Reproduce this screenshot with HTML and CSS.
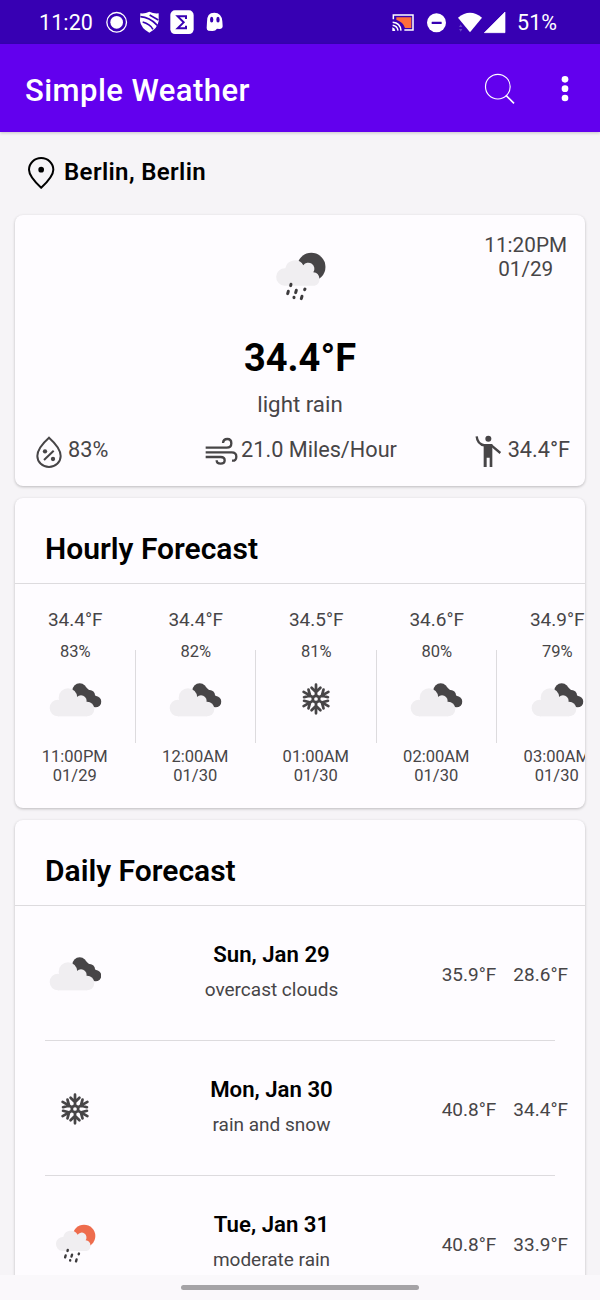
FILE: index.html
```
<!DOCTYPE html>
<html lang="en">
<head>
<meta charset="utf-8">
<title>Simple Weather</title>
<link rel="stylesheet" href="styles.css">
</head>
<body>
<svg class="defs" aria-hidden="true">
  <symbol id="cloudy" viewBox="146 248 158 102">
    <g fill="#474547"><circle cx="238" cy="271" r="22"/><circle cx="268" cy="285" r="16"/><circle cx="286" cy="304" r="17"/><path d="M217 267 250 255 290 290 280 320 240 300z"/></g>
    <g fill="#f0eef1"><circle cx="173" cy="323" r="25"/><circle cx="203" cy="292" r="28"/><circle cx="242" cy="302" r="17"/><circle cx="260" cy="326" r="22"/><rect x="173" y="305" width="87" height="43"/></g>
  </symbol>
  <symbol id="shower" viewBox="136 126 154 148">
    <circle class="orb" cx="245" cy="171" r="42.500"/>
    <path fill="#f0eef1" d="M164 227a26 26 0 0 1 3-52 29 29 0 0 1 54-9 17.500 17.500 0 0 1 30 21 20.500 20.500 0 0 1 4 40z"/>
    <g stroke="#3d3b3d" stroke-width="9" stroke-linecap="round"><path d="M184 223l-1 4M176 244l-2 7M200 241l-2 7M193 262v1M226 237l-1 2M217 259l-2 7"/></g>
  </symbol>
  <symbol id="snow" viewBox="-47 -47 94 94">
    <g fill="none" stroke="#474547" stroke-width="8" stroke-linecap="round">
      <circle r="9.500"/>
      <g id="arm"><path d="M0-11V-42M-13-33 0-20 13-33"/></g>
      <use href="#arm" transform="rotate(60)"/><use href="#arm" transform="rotate(120)"/><use href="#arm" transform="rotate(180)"/><use href="#arm" transform="rotate(240)"/><use href="#arm" transform="rotate(300)"/>
    </g>
  </symbol>
</svg>
<header class="status">
  <span class="clock">11:20</span>
  <svg class="tray" width="120" height="44" viewBox="315 0 360 132" fill="#fff">
    <circle cx="350" cy="67" r="29.500" fill="none" stroke="#fff" stroke-width="4"/><circle cx="350" cy="67" r="19"/>
    <path d="M421 40q14 2 27-5 14 7 28 5v23q-3 22-28 35-25-13-28-35z"/>
    <path d="M421 50q27 1 51 26M428 66q22 6 31 22M449 45l26 15" fill="none" stroke="#3700b3" stroke-width="5"/>
    <rect x="511" y="31" width="70" height="71" rx="14"/>
    <path d="M558 57V49H533l18 18-18 18h25v-8" fill="none" stroke="#3700b3" stroke-width="6"/>
    <path d="M621 66q-1-28 22-28 22 0 24 26l1 15q-1 8-9 8l-8-1q-5 8-15 7l-11-1q-5-2-5-8z"/>
    <ellipse cx="635" cy="59" rx="5" ry="8.500" fill="#3700b3"/><ellipse cx="654" cy="59" rx="5" ry="8.500" fill="#3700b3"/>
  </svg>
  <svg class="signals" width="116" height="44" viewBox="273 0 348 132" fill="#fff">
    <path d="M289 52h45v32h-19q-5-18-26-25z" fill="#ff6d3b"/>
    <path d="M280 58V45h59v45h-26M278 67q23 2 25 25M278 76q14 2 16 16" fill="none" stroke="#fff" stroke-width="4.500"/><path d="M277 82q8 2 9 11h-9z"/>
    <circle cx="409.500" cy="68" r="28.500"/><rect x="395" y="65" width="30" height="7" rx="1" fill="#3700b3"/>
    <path d="M474 53q36-29 72 0l-36 44z"/><path d="M553 98 615 36V98z" stroke="#fff" stroke-width="2" stroke-linejoin="round"/>
    <path d="M477 81l5-8 5 8zM477 87h10l-5 8z" fill="#6544c4"/>
  </svg>
  <span class="battery">51%</span>
</header>
<nav class="appbar">
  <h1>Simple Weather</h1>
  <svg class="search" width="32" height="32" viewBox="552 217 96 96" fill="none" stroke="#fff"><circle cx="593.500" cy="258" r="37" stroke-width="3.500"/><path d="M618 284l24 24" stroke-width="5"/></svg>
  <svg class="more" width="8" height="28" viewBox="784 224 24 84" fill="#fff"><circle cx="796" cy="237" r="10"/><circle cx="796" cy="265" r="10"/><circle cx="796" cy="293" r="10"/></svg>
</nav>
<main>
  <div class="place">
    <svg width="28" height="34" viewBox="81 469 84 102"><path d="M123.500 564Q87 530 87 510a36.500 35 0 0 1 73 0q0 20-36.500 54z" fill="none" stroke="#000" stroke-width="6"/><circle cx="123.500" cy="510" r="8.500"/></svg>
    <span>Berlin, Berlin</span>
  </div>
  <section class="card now">
    <div class="top"><svg class="hero night"><use href="#shower"/></svg><div class="stamp">11:20PM<br>01/29</div></div>
    <div class="temp">34.4°F</div>
    <div class="cond">light rain</div>
    <div class="stats">
      <div class="stat"><svg class="drop" width="26" height="32" viewBox="107 318 78 96"><path d="M146 323Q181 354 181 378a35 33 0 0 1-70 0q0-24 35-55z" fill="none" stroke="#474547" stroke-width="6"/><path d="M131 390l29-28" stroke="#474547" stroke-width="6"/><circle cx="134" cy="364" r="6.500" fill="#474547"/><circle cx="158" cy="387" r="6.500" fill="#474547"/></svg><span>83%</span></div>
      <div class="stat"><svg class="wind" width="33" height="29" viewBox="618 321 99 87" fill="none" stroke="#474547" stroke-width="7"><path d="M620 353h63q14 0 14-13t-12-13-13 12M620 367h78q14 0 14 13t-13 12M620 381h45q12 0 12 10t-12 10-12-10"/></svg><span>21.0 Miles/Hour</span></div>
      <div class="stat"><svg class="person" width="27" height="33" viewBox="525 317 81 99" fill="#474547"><circle cx="565" cy="328" r="9"/><path d="M551 344h26v69h-8V385h-9v28h-9z"/><path d="M530 321q2 24 24 27M574 348l27 23" fill="none" stroke="#474547" stroke-width="7"/></svg><span>34.4°F</span></div>
    </div>
  </section>
  <section class="card hourly">
    <h2>Hourly Forecast</h2>
    <div class="hours">
      <div class="hour"><b>34.4°F</b><i>83%</i><svg class="cloud"><use href="#cloudy"/></svg><p>11:00PM<br>01/29</p></div>
      <div class="hour"><b>34.4°F</b><i>82%</i><svg class="cloud"><use href="#cloudy"/></svg><p>12:00AM<br>01/30</p></div>
      <div class="hour"><b>34.5°F</b><i>81%</i><svg class="flake"><use href="#snow"/></svg><p>01:00AM<br>01/30</p></div>
      <div class="hour"><b>34.6°F</b><i>80%</i><svg class="cloud"><use href="#cloudy"/></svg><p>02:00AM<br>01/30</p></div>
      <div class="hour"><b>34.9°F</b><i>79%</i><svg class="cloud"><use href="#cloudy"/></svg><p>03:00AM<br>01/30</p></div>
    </div>
  </section>
  <section class="card daily">
    <h2>Daily Forecast</h2>
    <div class="day"><svg class="cloud"><use href="#cloudy"/></svg><div class="info"><h3>Sun, Jan 29</h3><p>overcast clouds</p></div><div class="range"><span>35.9°F</span><span>28.6°F</span></div></div>
    <div class="day"><svg class="flake"><use href="#snow"/></svg><div class="info"><h3>Mon, Jan 30</h3><p>rain and snow</p></div><div class="range"><span>40.8°F</span><span>34.4°F</span></div></div>
    <div class="day"><svg class="rain sun"><use href="#shower"/></svg><div class="info"><h3>Tue, Jan 31</h3><p>moderate rain</p></div><div class="range"><span>40.8°F</span><span>33.9°F</span></div></div>
  </section>
</main>
<footer class="gesture"><div class="pill"></div></footer>
</body>
</html>
```
FILE: styles.css
```
* { box-sizing: border-box; margin: 0; padding: 0; }
body { width: 600px; height: 1300px; overflow: hidden; display: flex; flex-direction: column; background: #f6f4f7; font-family: Roboto, "Liberation Sans", sans-serif; color: #474547; }
svg { display: block; flex: none; }
.defs { position: absolute; width: 0; height: 0; }
.status { flex: none; height: 44px; background: #3700b3; color: #fff; display: flex; align-items: center; padding-left: 39px; font-size: 21.5px; line-height: 44px; }
.tray { margin-left: 12px; }
.clock { width: 54px; white-space: nowrap; }
.clock, .battery { padding-top: 1px; letter-spacing: .1px; }
.signals { margin-left: auto; }
.battery { width: 93px; padding-left: 10px; }
.appbar { flex: none; height: 88px; background: #6200ee; color: #fff; display: flex; align-items: center; padding: 0 31px 0 25px; box-shadow: 0 1px 3px rgba(0, 0, 0, .2); z-index: 1; }
.appbar h1 { flex: 1; font-size: 31px; font-weight: 500; letter-spacing: .45px; line-height: 40px; padding-top: 5px; }
.search { margin-top: 1px; }
.more { margin-left: 45px; margin-top: 1px; }
main { flex: none; height: 1143px; overflow: hidden; padding: 0 15px; }
.place { height: 83px; display: flex; align-items: center; padding-left: 12px; gap: 9px; color: #000; font-size: 24px; font-weight: 600; letter-spacing: .37px; line-height: 30px; }
.place svg { margin-top: -1px; }
.place span { margin-top: -4px; }
.card { background: #fefcff; border-radius: 8px; box-shadow: 0 1px 3px rgba(0, 0, 0, .24); overflow: hidden; }
.now { height: 271px; margin-bottom: 12px; padding-top: 18px; }
.top { display: grid; grid-template-columns: 1fr 52px 1fr; padding: 0 18px; height: 96px; }
.hero { grid-column: 2; width: 51.300px; height: 49.300px; margin: 19px 0 0 .8px; }
.night { fill: #474547; }
.sun { fill: #ee6c4d; }
.stamp { justify-self: end; text-align: center; font-size: 20.700px; line-height: 24px; }
.temp { color: #000; text-align: center; font-size: 38px; font-weight: 700; line-height: 44px; margin-top: 7px; }
.cond { text-align: center; font-size: 22.300px; line-height: 30px; margin-top: 9px; }
.stats { display: grid; grid-template-columns: 1fr auto 1fr; padding: 0 15px 0 20px; margin-top: 15px; height: 34px; font-size: 21.700px; line-height: 32px; }
.stat { display: flex; align-items: flex-start; white-space: nowrap; }
.stat:last-child { justify-content: flex-end; }
.drop { margin: 2px 6px 0 1px; }
.wind { margin: 3px 3px 0 -3px; }
.person { margin: 1px 6px 0 0; }
h2 { height: 86px; padding: 35px 30px 0; font-size: 30px; line-height: 32px; font-weight: 600; color: #000; border-bottom: 1px solid #dddbde; }
.hourly { height: 310px; margin-bottom: 12px; }
.hours { display: flex; }
.hour { flex: none; width: 120.500px; height: 224px; display: flex; flex-direction: column; align-items: center; background: linear-gradient(#dddbde, #dddbde) right 66px / 1px 93px no-repeat; }
.hour b { font-size: 19px; font-weight: 400; line-height: 24px; margin-top: 24px; }
.hour i { font-style: normal; font-size: 16.500px; line-height: 20px; margin-top: 10px; }
.hour svg { margin-top: 21px; }
.hour p { margin-top: 30px; margin-left: -1px; text-align: center; font-size: 16.500px; line-height: 19px; }
.cloud { width: 52.670px; height: 34px; }
.flake { width: 32px; height: 32px; margin-left: -1px; }
.hour .flake { margin-top: 21px; margin-bottom: 2px; }
.rain { width: 41px; height: 39.500px; }
.daily { height: 600px; }
.day { height: 135px; display: grid; grid-template-columns: 120px 273px 1fr; align-items: center; background: linear-gradient(#dddbde, #dddbde) 30px 100% / 510px 1px no-repeat; }
.day > svg { justify-self: center; }
.info { text-align: center; margin-top: -6px; }
.info h3 { color: #000; font-size: 22.200px; line-height: 30px; font-weight: 600; }
.info p { font-size: 19px; line-height: 24px; margin-top: 9px; }
.range { display: flex; justify-content: flex-end; gap: 17px; padding: 2px 17px 0 0; font-size: 19px; white-space: nowrap; }
.gesture { flex: none; height: 25px; background: #faf8fb; display: flex; justify-content: center; padding-top: 10px; }
.pill { width: 238px; height: 5px; border-radius: 3px; background: #a5a3a6; }
```
